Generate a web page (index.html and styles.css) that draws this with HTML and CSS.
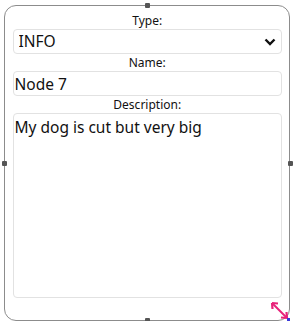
FILE: index.html
```html
<!DOCTYPE html>
<html lang="en">
<head>
    <meta charset="UTF-8">
    <title>Node editor</title>
    <link rel="stylesheet" href="styles.css">
</head>
<body>

<div class="node">
    <span class="handle handle-top"></span>
    <span class="handle handle-left"></span>
    <span class="handle handle-right"></span>
    <span class="handle handle-bottom"></span>

    <label class="field-label" for="type">Type:</label>
    <div class="select-wrap">
        <select id="type" class="field">
            <option>INFO</option>
            <option>WARNING</option>
            <option>ERROR</option>
        </select>
        <svg class="chevron" width="12" height="8" viewBox="0 0 12 8">
            <path d="M1.5 1.5 L6 6 L10.5 1.5" fill="none" stroke="#111" stroke-width="2.4"/>
        </svg>
    </div>

    <label class="field-label" for="name">Name:</label>
    <input id="name" class="field" type="text" value="Node 7">

    <label class="field-label" for="desc">Description:</label>
    <textarea id="desc" class="field desc">My dog is cut but very big</textarea>

    <svg class="resize" width="20" height="20" viewBox="0 0 20 20">
        <path d="M3 3 L16 16" stroke="#e8237a" stroke-width="2"/>
        <path d="M2 2 L8 2.5 M2 2 L2.5 8" stroke="#e8237a" stroke-width="2.2"/>
        <path d="M17 17 L11 16.5 M17 17 L16.5 11" stroke="#e8237a" stroke-width="2.2"/>
        <rect x="17" y="17" width="3" height="3" fill="#3a3ad8"/>
    </svg>
</div>

</body>
</html>
```

FILE: styles.css
```css
* {
    margin: 0;
    padding: 0;
    box-sizing: border-box;
}

body {
    font-family: "Noto Sans", "Open Sans", sans-serif;
    background-color: #ffffff;
    color: #111;
}

/* Node card */
.node {
    position: relative;
    width: 286px;
    height: 316px;
    margin: 5px 0 0 4px;
    border: 1.5px solid #8c8c8c;
    border-radius: 12px;
    padding: 6px 7px 0 7.5px;
    display: flex;
    flex-direction: column;
}

.handle {
    position: absolute;
    width: 5px;
    height: 5px;
    background-color: #555;
    border-radius: 1px;
}

.handle-top { top: -3px; left: 140px; }
.handle-bottom { bottom: -3px; left: 140px; }
.handle-left { left: -3.5px; top: 155px; }
.handle-right { right: -3.5px; top: 155px; }

/* Fields */
.field-label {
    display: block;
    text-align: center;
    font-size: 12px;
    line-height: 17px;
    height: 17px;
    color: #111;
}

.field {
    width: 100%;
    height: 25px;
    border: 1px solid #e2e2e2;
    border-radius: 4px;
    background-color: #fff;
    font-family: inherit;
    font-size: 15.5px;
    color: #111;
    outline: none;
}

.select-wrap {
    position: relative;
}

select.field {
    appearance: none;
    -webkit-appearance: none;
    padding: 0 0 0 5px;
    line-height: 23px;
}

.chevron {
    position: absolute;
    right: 6px;
    top: 9px;
    pointer-events: none;
}

input.field {
    padding: 0 1px;
}

.desc {
    height: 185px;
    resize: none;
    padding: 2px 1px;
    line-height: 22px;
}

.resize {
    position: absolute;
    right: -1px;
    bottom: -1px;
}
```
